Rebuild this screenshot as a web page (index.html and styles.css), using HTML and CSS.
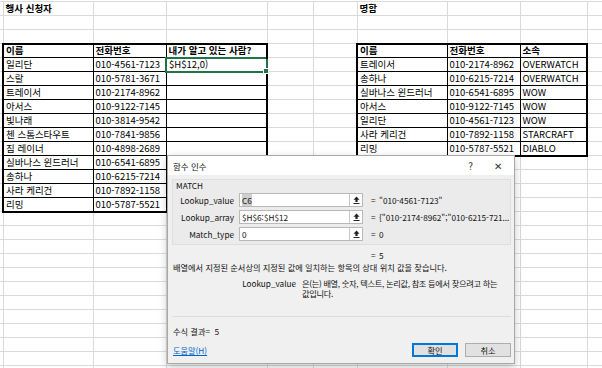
FILE: index.html
```html
<!DOCTYPE html>
<html lang="ko">
<head>
    <meta charset="UTF-8">
    <title>MATCH 함수 인수</title>
    <link rel="stylesheet" href="styles.css">
</head>
<body>
    <table class="grid">
        <colgroup>
            <col class="w-edge"><col class="w-a"><col class="w-b"><col class="w-c"><col class="w-d">
            <col class="w-e"><col class="w-f"><col class="w-g"><col class="w-h"><col class="w-i">
        </colgroup>
        <tr><td></td><td class="title">행사 신청자</td><td></td><td></td><td></td><td></td><td class="title">명함</td><td></td><td></td><td></td></tr>
        <tr><td></td><td></td><td></td><td></td><td></td><td></td><td></td><td></td><td></td><td></td></tr>
        <tr><td></td><td></td><td></td><td></td><td></td><td></td><td></td><td></td><td></td><td></td></tr>
        <tr><td></td><td class="t T L h">이름</td><td class="t T h">전화번호</td><td class="t T R h">내가 알고 있는 사람?</td><td></td><td></td><td class="t T L h">이름</td><td class="t T h">전화번호</td><td class="t T R h">소속</td><td></td></tr>
        <tr><td></td><td class="t L">일리단</td><td class="t">010-4561-7123</td><td class="t R sel">$H$12,0)</td><td></td><td></td><td class="t L">트레이서</td><td class="t">010-2174-8962</td><td class="t R">OVERWATCH</td><td></td></tr>
        <tr><td></td><td class="t L">스랄</td><td class="t">010-5781-3671</td><td class="t R"></td><td></td><td></td><td class="t L">송하나</td><td class="t">010-6215-7214</td><td class="t R">OVERWATCH</td><td></td></tr>
        <tr><td></td><td class="t L">트레이서</td><td class="t">010-2174-8962</td><td class="t R"></td><td></td><td></td><td class="t L">실바나스 윈드러너</td><td class="t">010-6541-6895</td><td class="t R">WOW</td><td></td></tr>
        <tr><td></td><td class="t L">아서스</td><td class="t">010-9122-7145</td><td class="t R"></td><td></td><td></td><td class="t L">아서스</td><td class="t">010-9122-7145</td><td class="t R">WOW</td><td></td></tr>
        <tr><td></td><td class="t L">빛나래</td><td class="t">010-3814-9542</td><td class="t R"></td><td></td><td></td><td class="t L">일리단</td><td class="t">010-4561-7123</td><td class="t R">WOW</td><td></td></tr>
        <tr><td></td><td class="t L">첸 스톰스타우트</td><td class="t">010-7841-9856</td><td class="t R"></td><td></td><td></td><td class="t L">사라 케리건</td><td class="t">010-7892-1158</td><td class="t R">STARCRAFT</td><td></td></tr>
        <tr><td></td><td class="t L">짐 레이너</td><td class="t">010-4898-2689</td><td class="t R"></td><td></td><td></td><td class="t L B">리밍</td><td class="t B">010-5787-5521</td><td class="t R B">DIABLO</td><td></td></tr>
        <tr><td></td><td class="t L">실바나스 윈드러너</td><td class="t">010-6541-6895</td><td class="t R"></td><td></td><td></td><td></td><td></td><td></td><td></td></tr>
        <tr><td></td><td class="t L">송하나</td><td class="t">010-6215-7214</td><td class="t R"></td><td></td><td></td><td></td><td></td><td></td><td></td></tr>
        <tr><td></td><td class="t L">사라 케리건</td><td class="t">010-7892-1158</td><td class="t R"></td><td></td><td></td><td></td><td></td><td></td><td></td></tr>
        <tr><td></td><td class="t L B">리밍</td><td class="t B">010-5787-5521</td><td class="t R B"></td><td></td><td></td><td></td><td></td><td></td><td></td></tr>
        <tr><td></td><td></td><td></td><td></td><td></td><td></td><td></td><td></td><td></td><td></td></tr>
        <tr><td></td><td></td><td></td><td></td><td></td><td></td><td></td><td></td><td></td><td></td></tr>
        <tr><td></td><td></td><td></td><td></td><td></td><td></td><td></td><td></td><td></td><td></td></tr>
        <tr><td></td><td></td><td></td><td></td><td></td><td></td><td></td><td></td><td></td><td></td></tr>
        <tr><td></td><td></td><td></td><td></td><td></td><td></td><td></td><td></td><td></td><td></td></tr>
        <tr><td></td><td></td><td></td><td></td><td></td><td></td><td></td><td></td><td></td><td></td></tr>
        <tr><td></td><td></td><td></td><td></td><td></td><td></td><td></td><td></td><td></td><td></td></tr>
        <tr><td></td><td></td><td></td><td></td><td></td><td></td><td></td><td></td><td></td><td></td></tr>
        <tr><td></td><td></td><td></td><td></td><td></td><td></td><td></td><td></td><td></td><td></td></tr>
        <tr><td></td><td></td><td></td><td></td><td></td><td></td><td></td><td></td><td></td><td></td></tr>
        <tr><td></td><td></td><td></td><td></td><td></td><td></td><td></td><td></td><td></td><td></td></tr>
        <tr><td></td><td></td><td></td><td></td><td></td><td></td><td></td><td></td><td></td><td></td></tr>
    </table>

    <!-- 함수 인수 대화상자 -->
    <div class="dialog">
        <div class="dlg-title">
            <span>함수 인수</span>
            <span class="dlg-ctl"><span>?</span><span class="close">✕</span></span>
        </div>
        <div class="dlg-body">
            <div class="group">
                <div class="group-name">MATCH</div>
                <div class="arg">
                    <span class="arg-name">Lookup_value</span>
                    <span class="box"><span class="box-text"><span class="hl">C6</span></span><span class="pick"><svg width="7" height="8" viewBox="0 0 7 8"><path d="M3.5 0.5 L6.5 3.8 H4.6 V6 H2.4 V3.8 H0.5 Z" fill="#222"/><rect x="0.5" y="7" width="6" height="1" fill="#222"/></svg></span></span>
                    <span class="eq">=</span>
                    <span class="arg-val">"010-4561-7123"</span>
                </div>
                <div class="arg">
                    <span class="arg-name">Lookup_array</span>
                    <span class="box"><span class="box-text">$H$6:$H$12</span><span class="pick"><svg width="7" height="8" viewBox="0 0 7 8"><path d="M3.5 0.5 L6.5 3.8 H4.6 V6 H2.4 V3.8 H0.5 Z" fill="#222"/><rect x="0.5" y="7" width="6" height="1" fill="#222"/></svg></span></span>
                    <span class="eq">=</span>
                    <span class="arg-val">{"010-2174-8962";"010-6215-721...</span>
                </div>
                <div class="arg">
                    <span class="arg-name">Match_type</span>
                    <span class="box"><span class="box-text">0</span><span class="pick"><svg width="7" height="8" viewBox="0 0 7 8"><path d="M3.5 0.5 L6.5 3.8 H4.6 V6 H2.4 V3.8 H0.5 Z" fill="#222"/><rect x="0.5" y="7" width="6" height="1" fill="#222"/></svg></span></span>
                    <span class="eq">=</span>
                    <span class="arg-val">0</span>
                </div>
            </div>
            <div class="total"><span class="eq">=</span><span>5</span></div>
            <p class="desc">배열에서 지정된 순서상의 지정된 값에 일치하는 항목의 상대 위치 값을 찾습니다.</p>
            <div class="arg-desc">
                <span class="arg-desc-name">Lookup_value</span>
                <span class="arg-desc-text">은(는) 배열, 숫자, 텍스트, 논리값, 참조 등에서 찾으려고 하는 값입니다.</span>
            </div>
            <div class="sep"></div>
            <div class="result">수식 결과=&nbsp;&nbsp;5</div>
            <div class="footer">
                <a class="help" href="#">도움말(H)</a>
                <span class="btn ok">확인</span>
                <span class="btn">취소</span>
            </div>
        </div>
    </div>
</body>
</html>
```

FILE: styles.css
```css
body {
    margin: 0;
    width: 602px;
    height: 368px;
    overflow: hidden;
    background: #fff;
    font-family: "Noto Sans CJK KR", sans-serif;
    color: #000;
    position: relative;
}

/* 시트 */
.grid {
    border-collapse: collapse;
    table-layout: fixed;
    width: 620px;
    margin-top: 1px;
    border-top: 1px solid #dadada;
}

.w-edge { width: 3px; }
.w-a { width: 90px; }
.w-b { width: 73px; }
.w-c { width: 101px; }
.w-d { width: 46px; }
.w-e { width: 44px; }
.w-f { width: 90px; }
.w-g { width: 73px; }
.w-h { width: 67px; }
.w-i { width: 33px; }

.grid tr {
    height: 14px;
}

.grid td {
    padding: 0 0 0 2px;
    border-right: 1px solid #dadada;
    border-bottom: 1px solid #dadada;
    font-size: 9.5px;
    line-height: 11px;
    white-space: nowrap;
    overflow: visible;
    vertical-align: middle;
}

.grid td.title {
    font-weight: bold;
}

.grid td.t { border: 1px solid #000; }
.grid td.T { border-top: 2px solid #000; }
.grid td.L { border-left: 2px solid #000; }
.grid td.R { border-right: 2px solid #000; }
.grid td.B { border-bottom: 2px solid #000; }

.grid td.h { font-weight: bold; }

.grid td.sel {
    border: 2px solid #217346;
    position: relative;
}

.grid td.sel::after {
    content: "";
    position: absolute;
    right: -3px;
    bottom: -3px;
    width: 4px;
    height: 4px;
    background: #217346;
    border: 1px solid #fff;
}

/* 대화상자 */
.dialog {
    position: absolute;
    left: 167px;
    top: 155px;
    width: 346px;
    height: 207px;
    background: #f0f0f0;
    border: 1px solid #a8a8a8;
    box-shadow: 0 3px 8px rgba(0, 0, 0, 0.22);
    font-size: 8.2px;
    color: #111;
    display: flex;
    flex-direction: column;
}

.dlg-title {
    height: 19px;
    background: #fff;
    display: flex;
    align-items: center;
    justify-content: space-between;
    padding: 0 12px 0 5px;
    font-size: 8.5px;
}

.dlg-ctl {
    display: flex;
    gap: 21px;
    font-size: 10px;
    color: #333;
}

.dlg-body {
    flex: 1;
    padding: 4px 3px 0 4px;
    display: flex;
    flex-direction: column;
}

.group {
    height: 66px;
    border: 1px solid #dedede;
    background: #ebebeb;
    padding: 0;
    box-sizing: border-box;
}

.group-name {
    padding-left: 3px;
    line-height: 10px;
    margin-bottom: 3px;
}

.arg {
    display: flex;
    align-items: center;
    height: 14px;
    margin-bottom: 3px;
    white-space: nowrap;
}

.arg-name {
    flex-shrink: 0;
    width: 61px;
    text-align: right;
    padding-right: 5px;
}

.box {
    flex-shrink: 0;
    display: flex;
    width: 124px;
    height: 14px;
    box-sizing: border-box;
    border: 1px solid #b9b9b9;
    background: #fff;
}

.box-text {
    flex: 1;
    padding-left: 2px;
    line-height: 12px;
}

.hl {
    background: #cfcfcf;
}

.pick {
    width: 12px;
    border-left: 1px solid #c8c8c8;
    display: flex;
    align-items: center;
    justify-content: center;
}

.eq {
    flex-shrink: 0;
    width: 8px;
    margin-left: 8px;
}

.arg-val {
    min-width: 0;
    overflow: hidden;
}

.total {
    display: flex;
    padding-left: 191px;
    margin-top: 4px;
    line-height: 12px;
}

.desc {
    margin: 0;
    padding-left: 1px;
    line-height: 12px;
}

.arg-desc {
    display: flex;
    margin-top: 5px;
    line-height: 10px;
}

.arg-desc-name {
    width: 124px;
    text-align: right;
    flex-shrink: 0;
    padding-right: 6px;
}

.arg-desc-text {
    width: 210px;
    letter-spacing: -0.3px;
    word-break: keep-all;
}

.sep {
    height: 1px;
    background: #dcdcdc;
    margin: 18px 0 0 0;
}

.result {
    margin-top: 8px;
    line-height: 12px;
    padding-left: 1px;
}

.footer {
    display: flex;
    align-items: center;
    margin-top: 6px;
    gap: 6px;
}

.help {
    color: #0066cc;
    margin-right: auto;
    padding-left: 1px;
}

.btn {
    width: 46px;
    height: 14px;
    box-sizing: border-box;
    border: 1px solid #adadad;
    background: #e1e1e1;
    text-align: center;
    line-height: 12px;
}

.btn.ok {
    border: 1px solid #0078d7;
    box-shadow: inset 0 0 0 1px #0078d7;
    margin-right: 1px;
}
```
